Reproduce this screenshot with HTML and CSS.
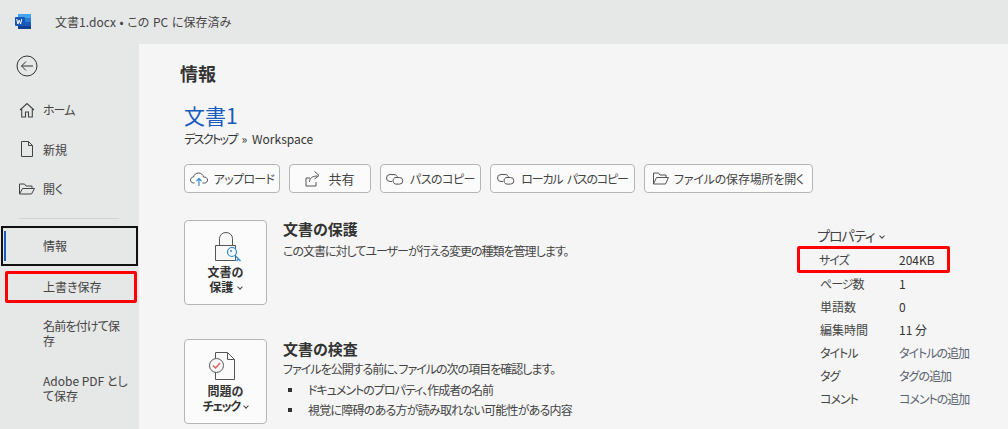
FILE: index.html
```html
<!DOCTYPE html>
<html lang="ja">
<head>
<meta charset="utf-8">
<title>情報</title>
<link rel="stylesheet" href="styles.css">
</head>
<body>
<header class="titlebar">
  <svg class="word-logo" width="17" height="17" viewBox="0 0 17 17"><rect x="3" y="1" width="13" height="15" rx="1" fill="#2b7cd3"/><rect x="3" y="1" width="13" height="4" fill="#41a5ee"/><rect x="3" y="9" width="13" height="4" fill="#185abd"/><rect x="3" y="13" width="13" height="3" fill="#103f91"/><rect x="0" y="4" width="10" height="9" rx="1" fill="#1a56b8"/><path d="M1.700 6l1.200 5 1.300-4 1.400 4 1.200-5" fill="none" stroke="#fff" stroke-width="1"/></svg>
  <span class="doc-state">文書1.docx • この PC に保存済み</span>
</header>
<div class="body">
  <nav class="sidebar">
    <button class="back" aria-label="戻る">
      <svg width="22" height="22" viewBox="0 0 22 22"><circle cx="11" cy="11" r="10" fill="none" stroke="#333" stroke-width="1"/><path d="M17 11H5.500M10 6.500L5.500 11l4.500 4.500" fill="none" stroke="#333" stroke-width="1"/></svg>
    </button>
    <ul class="nav-top">
      <li class="nav-item"><svg width="16" height="16" viewBox="0 0 16 16"><path d="M1 8l7-6.500L15 8M2.700 6.500V15h3.800v-5h3v5h3.800V6.500" fill="none" stroke="#444" stroke-width="1.100"/></svg><span class="kana">ホーム</span></li>
      <li class="nav-item"><svg width="16" height="16" viewBox="0 0 16 16"><path d="M2.500.5h7l4 4v11h-11zM9.500.5v4h4" fill="none" stroke="#444" stroke-width="1"/></svg><span>新規</span></li>
      <li class="nav-item"><svg width="16" height="16" viewBox="0 0 16 16"><path d="M.5 13V3h5l1.500 2h6v2.500M.5 13l3-5.500h12l-3 5.500z" fill="none" stroke="#444" stroke-width="1"/></svg><span>開く</span></li>
    </ul>
    <hr class="nav-rule">
    <div class="nav-current"><span class="nav-mark"></span>情報</div>
    <div class="nav-save">上書き保存</div>
    <div class="nav-text nav-name">名前を付けて保存</div>
    <div class="nav-text nav-pdf">Adobe PDF として保存</div>
  </nav>
  <main class="main">
    <h1 class="page-title">情報</h1>
    <h2 class="doc-title">文書1</h2>
    <p class="path"><span class="path-kana">デスクトップ</span> » Workspace</p>
    <div class="actions">
      <button class="action act-upload"><svg width="18" height="14" viewBox="0 0 18 14"><path d="M4.500 11H3.800C1 11 .5 8.800.5 8c0-1.800 1.300-3 3-3 .5-2.500 2.700-4 5-4 2.500 0 4.500 1.600 5 4 2.200 0 4 1 4 3 0 1.500-1 3-3 3h-2" fill="none" stroke="#555" stroke-width="1"/><path d="M9 14V6.500M6.500 9L9 6.500 11.500 9" fill="none" stroke="#2b88d8" stroke-width="1.100"/></svg><span>アップロード</span></button>
      <button class="action act-share"><svg width="16" height="17" viewBox="0 0 16 17"><path d="M5 8H1v8h10v-4" fill="none" stroke="#555" stroke-width="1"/><path d="M4.500 12c0-4 3-6 8-6M9.500 1.500L14 5.500 9.500 9" fill="none" stroke="#555" stroke-width="1"/></svg><span>共有</span></button>
      <button class="action act-copy"><svg width="18" height="12" viewBox="0 0 18 12"><use href="#link"/></svg><span>パスのコピー</span></button>
      <button class="action act-local"><svg width="18" height="12" viewBox="0 0 18 12"><use href="#link"/></svg><span>ローカル パスのコピー</span></button>
      <button class="action act-folder"><svg width="16" height="13" viewBox="0 0 16 13"><path d="M.5 12V1h5l1.500 2h6v2.500M.5 12l3-6.500h12L12.500 12z" fill="none" stroke="#555" stroke-width="1"/></svg><span>ファイルの保存場所を開く</span></button>
    </div>
    <div class="panels">
      <div class="sections">
        <section class="section sec-protect">
          <button class="tile">
            <svg class="tile-icon icon-lock" width="28" height="30" viewBox="0 0 28 30"><path d="M.5 13.500h20v15H.5zM4.500 13.500V6.500a6.500 6 0 0 1 13 0v7" fill="#f8f8f8" stroke="#555" stroke-width="1"/><circle cx="17" cy="20" r="4.500" fill="#f8f8f8" stroke="#2b88d8" stroke-width="1.200"/><circle cx="16" cy="19" r="1" fill="#2b88d8"/><path d="M20 23.500l5.500 5.500M23.500 27l-2 2" fill="none" stroke="#2b88d8" stroke-width="1.300"/></svg>
            <span>文書の<br>保護 <i class="chev"></i></span>
          </button>
          <div class="sec-text">
            <h3>文書の保護</h3>
            <p>この文書に対してユーザーが行える変更の種類を管理します。</p>
          </div>
        </section>
        <section class="section sec-check">
          <button class="tile">
            <svg class="tile-icon icon-check" width="28" height="30" viewBox="0 0 28 30"><path d="M7.500 7V1.500h12l7 7v20h-19V21M19.500 1.500v7h7" fill="none" stroke="#555" stroke-width="1"/><circle cx="8.500" cy="14.500" r="7" fill="#f8f8f8" stroke="#555" stroke-width="1"/><path d="M5 14.500l2.500 2.500 4.500-5" fill="none" stroke="#e0555a" stroke-width="1.300"/></svg>
            <span>問題の<br><span class="tile-kana">チェック</span> <i class="chev"></i></span>
          </button>
          <div class="sec-text">
            <h3>文書の検査</h3>
            <p>ファイルを公開する前に、ファイルの次の項目を確認します。</p>
            <ul class="bullets">
              <li>ドキュメントのプロパティ、作成者の名前</li>
              <li>視覚に障碍のある方が読み取れない可能性がある内容</li>
            </ul>
          </div>
        </section>
      </div>
      <aside class="props">
        <div class="props-head">プロパティ <i class="chev"></i></div>
        <dl class="prop prop-size"><dt>サイズ</dt><dd>204KB</dd></dl>
        <dl class="prop"><dt>ページ数</dt><dd>1</dd></dl>
        <dl class="prop"><dt class="kanji">単語数</dt><dd>0</dd></dl>
        <dl class="prop"><dt class="kanji">編集時間</dt><dd>11 分</dd></dl>
        <dl class="prop"><dt>タイトル</dt><dd class="muted">タイトルの追加</dd></dl>
        <dl class="prop"><dt>タグ</dt><dd class="muted">タグの追加</dd></dl>
        <dl class="prop"><dt>コメント</dt><dd class="muted">コメントの追加</dd></dl>
      </aside>
    </div>
  </main>
</div>
<svg class="defs" width="0" height="0"><defs><g id="link" fill="none" stroke="#555" stroke-width="1"><path d="M6 8.500H4a3.500 3.500 0 0 1 0-7h4c2 0 3.500 1.500 3.500 3.200"/><path d="M7 8c0-2 1-3.500 3-3.500h3.500a3.300 3.300 0 0 1 0 6.600H10C8.500 11.100 7.300 10 7 8"/></g></defs></svg>
</body>
</html>
```
FILE: styles.css
```css
* { box-sizing: border-box; }
html, body { margin: 0; height: 429px; overflow: hidden; }
body {
  width: 1008px;
  background: #e6e7e7;
  color: #333;
  font-family: "Noto Sans CJK JP", "Noto Sans", sans-serif;
  font-size: 12px;
  font-feature-settings: "palt";
}
h1, h2, h3, p, ul, dl, dd { margin: 0; padding: 0; }
ul { list-style: none; }
button { font: inherit; color: inherit; font-feature-settings: inherit; }
i { font-style: normal; }
.defs { position: absolute; }
.kana { letter-spacing: -1px; }

.titlebar { height: 44px; display: flex; align-items: center; padding-left: 15px; }
.word-logo { margin-right: 23px; margin-top: -2px; }
.doc-state { font-size: 12px; color: #444; margin-top: -2px; word-spacing: 1px; }

.body { display: flex; height: 385px; }
.sidebar { width: 139px; flex: none; position: relative; }
.back { display: block; background: none; border: 0; padding: 0; margin: 11px 0 0 16px; height: 22px; width: 22px; }
.nav-top { margin-top: 13px; }
.nav-item { display: flex; align-items: center; height: 39.5px; padding-left: 19px; gap: 8px; color: #444; }
.nav-rule { border: 0; border-top: 1px solid #d2d3d3; margin: 9.5px 20px 0 19px; height: 0; }
.nav-current {
  margin: 7px 0 0 1px;
  width: 137px;
  height: 40px;
  border: 2px solid #111;
  padding-left: 40px;
  line-height: 36px;
  position: relative;
  color: #444;
}
.nav-mark { position: absolute; left: 1px; top: 3px; width: 2px; height: 30px; background: #185abd; }
.nav-save {
  margin: 5px 0 0 5px;
  width: 132px;
  height: 32px;
  border: 3px solid #f00;
  border-radius: 2px;
  padding-left: 35px;
  line-height: 26px;
  color: #444;
}
.nav-text { padding-left: 43px; padding-right: 8px; line-height: 15px; color: #444; }
.nav-name { margin-top: 15px; padding-right: 14px; letter-spacing: -.8px; }
.nav-pdf { margin-top: 25px; }

.main { flex: 1; background: #f5f5f5; padding: 0 0 0 41px; min-width: 0; }
.page-title { font-size: 18px; font-weight: 700; line-height: 24px; margin-top: 17px; color: #333; }
.doc-title { font-size: 21px; font-weight: 400; line-height: 28px; color: #185abd; margin: 16px 0 0 4px; }
.path { font-size: 12px; line-height: 16px; margin: 2px 0 0 4px; color: #333; word-spacing: 2px; }
.path-kana { letter-spacing: -1.6px; }
.actions { display: flex; margin: 17px 0 0 4px; gap: 9px; }
.action {
  display: flex; align-items: center; justify-content: center; gap: 5px;
  height: 29px; background: #fbfbfb; border: 1px solid #b5b5b5; border-radius: 4px; padding: 0;
  font-size: 12px; color: #444; letter-spacing: -1px;
}
.act-upload { width: 96px; gap: 6px; letter-spacing: -.7px; }
.act-share { width: 82px; gap: 7px; font-size: 13px; letter-spacing: 0; }
.act-copy { width: 101px; gap: 6px; letter-spacing: -.5px; }
.act-local { width: 145px; gap: 6px; letter-spacing: -1.2px; word-spacing: 3px; }
.act-folder { width: 169px; letter-spacing: -.2px; }

.panels { display: flex; }
.sections { width: 610px; flex: none; }
.section { display: flex; margin-left: 4px; }
.sec-protect { margin-top: 27px; height: 119px; }
.tile {
  width: 83px; height: 85px; flex: none;
  background: #fbfbfb; border: 1px solid #b5b5b5; border-radius: 4px; padding: 11px 0 0;
  display: flex; flex-direction: column; align-items: center;
  font-weight: 700; font-size: 12px; line-height: 15px; color: #333;
}
.tile-icon { margin-bottom: 2px; flex: none; }
.icon-lock { margin-left: 7px; }
.icon-check { margin-left: -7px; }
.tile-kana { letter-spacing: -1.4px; }
.chev { display: inline-block; width: 4px; height: 4px; border-right: 1px solid #444; border-bottom: 1px solid #444; transform: rotate(45deg); margin: 0 0 3px 2px; }
.sec-text { margin-left: 16px; }
.sec-text h3 { font-size: 15px; font-weight: 700; line-height: 20px; color: #333; margin-top: -1px; }
.sec-check h3 { margin-top: 0; }
.sec-text p { line-height: 16px; margin-top: 2px; color: #444; letter-spacing: -1px; }
.sec-protect p { margin-top: 4px; }
.bullets { margin-top: 3px; }
.bullets li { line-height: 20px; padding-left: 25px; position: relative; color: #444; letter-spacing: -1px; }
.bullets li:last-child { letter-spacing: -.76px; }
.bullets li::before { content: ""; position: absolute; left: 5px; top: 8px; width: 4px; height: 4px; background: #333; }

.props { width: 190px; flex: none; padding-top: 32px; margin-left: 8px; white-space: nowrap; }
.props-head { font-size: 14px; line-height: 20px; color: #444; margin: 0 0 0 19px; height: 22px; letter-spacing: -1px; }
.props-head .chev { margin-left: 3px; }
.prop { display: flex; margin: 0; height: 23px; line-height: 23px; padding-left: 22px; font-size: 12px; }
.prop dt { width: 79px; flex: none; color: #444; letter-spacing: -1px; }
.prop .kanji { letter-spacing: 0; }
.prop dd { color: #333; }
.prop .muted { color: #5a6270; letter-spacing: -1px; }
.prop-size { border: 3px solid #f00; border-radius: 2px; width: 153px; height: 27px; line-height: 21px; margin: -1px 0 -1px -1px; padding-left: 0; }
.prop-size dt { padding-left: 19px; width: 99px; }
```
